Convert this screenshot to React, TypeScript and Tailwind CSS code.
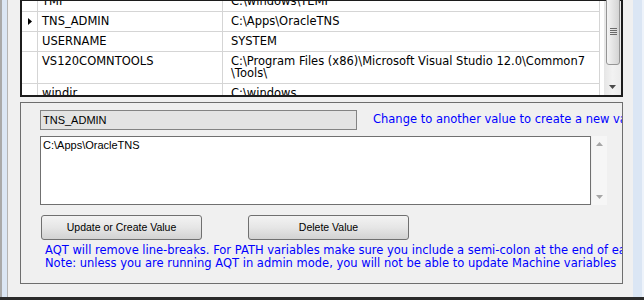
import React from 'react';

const rows = [
    { name: 'TMP', value: ['C:\\windows\\TEMP'], h: 'h-[20px] -mt-[9px]', arrow: false },
    { name: 'TNS_ADMIN', value: ['C:\\Apps\\OracleTNS'], h: 'h-[20px]', arrow: true },
    { name: 'USERNAME', value: ['SYSTEM'], h: 'h-[20px]', arrow: false },
    {
        name: 'VS120COMNTOOLS',
        value: ['C:\\Program Files (x86)\\Microsoft Visual Studio 12.0\\Common7', '\\Tools\\'],
        h: 'h-[32px]',
        arrow: false,
    },
    { name: 'windir', value: ['C:\\windows'], h: 'h-[20px]', arrow: false },
];

function GridScrollBar() {
    return (
        <div className="w-[17px] flex flex-col bg-gradient-to-r from-[#e6e6e6] via-[#f2f2f2] to-[#ebebeb]">
            <div className="-mt-[12px] h-[76px] ml-[2px] mr-[1px] rounded-[3px] border border-[#959595] bg-gradient-to-r from-[#f4f4f4] to-[#d4d4d4] flex items-end justify-center pb-[28px]">
                <svg width="7" height="8" viewBox="0 0 7 8">
                    <line x1="0" y1="0.5" x2="7" y2="0.5" stroke="#6a6a6a" />
                    <line x1="0" y1="2.5" x2="7" y2="2.5" stroke="#6a6a6a" />
                    <line x1="0" y1="4.5" x2="7" y2="4.5" stroke="#6a6a6a" />
                    <line x1="0" y1="6.5" x2="7" y2="6.5" stroke="#6a6a6a" />
                </svg>
            </div>
            <div className="flex-1" />
            <div className="h-[17px] flex items-center justify-center">
                <svg width="7" height="4" viewBox="0 0 7 4">
                    <polygon points="0,0 7,0 3.5,4" fill="#4a4a4a" />
                </svg>
            </div>
        </div>
    );
}

function VariableGrid() {
    return (
        <div className="ml-[12px] w-[603px] h-[97px] border-x-2 border-b-2 border-t border-[#1c1c1c] bg-white flex">
            <div className="flex-1 overflow-hidden flex flex-col font-['DejaVu_Sans',sans-serif] text-[11.5px] text-black leading-[12px]">
                {rows.map((r) => (
                    <div key={r.name} className={`shrink-0 w-[578px] flex border-b border-[#d5d5d5] ${r.h}`}>
                        <div className="w-[16px] border-r border-[#d5d5d5] flex items-center justify-center">
                            {r.arrow && (
                                <svg width="4" height="7" viewBox="0 0 4 7">
                                    <polygon points="0,0 4,3.5 0,7" fill="#000" />
                                </svg>
                            )}
                        </div>
                        <div className="w-[185px] border-r border-[#d5d5d5] pl-[4px] pt-[3px] whitespace-nowrap">
                            {r.name}
                        </div>
                        <div className="w-[377px] border-r border-[#d5d5d5] pl-[8px] pt-[3px] whitespace-nowrap">
                            {r.value.map((v) => (
                                <div key={v}>{v}</div>
                            ))}
                        </div>
                    </div>
                ))}
            </div>
            <GridScrollBar />
        </div>
    );
}

function WinButton({ label }: { label: string }) {
    return (
        <button className="w-[161px] h-[25px] rounded-[3px] border border-[#707070] bg-gradient-to-b from-[#f3f3f3] via-[#e6e6e6] to-[#d2d2d2] font-['Liberation_Sans',sans-serif] text-[10.5px] text-black">
            {label}
        </button>
    );
}

export default function App() {
    return (
        <div className="w-[644px] h-[300px] flex flex-col bg-[#f0f0f0] overflow-hidden">
            <div className="flex flex-1 min-h-0">
                <div className="w-[2px] bg-[#a9a9a9]" />
                <div className="w-[5px] bg-[#dbe6f4]" />
                <div className="w-px bg-[#b4b4b4]" />
                <div className="w-[625px] flex flex-col">
                    <VariableGrid />

                    <div className="ml-[12px] mt-[5px] w-[603px] h-[182px] border border-[#6e6e6e] overflow-hidden pl-[19px] pt-[7px]">
                        <div className="flex items-center">
                            <div className="shrink-0 w-[317px] h-[20px] border border-[#838383] bg-[#e3e3e3] pl-[2px] flex items-center font-['Liberation_Sans',sans-serif] text-[11px] text-black">
                                TNS_ADMIN
                            </div>
                            <div className="shrink-0 ml-[16px] whitespace-nowrap font-['DejaVu_Sans',sans-serif] text-[11.5px] text-[#0000ff]">
                                Change to another value to create a new variable
                            </div>
                        </div>

                        <div className="mt-[6px] flex">
                            <div className="shrink-0 w-[551px] h-[69px] border border-[#707070] bg-white pl-[2px] pt-[2px] font-['Liberation_Sans',sans-serif] text-[11px] leading-[13px] text-black">
                                C:\Apps\OracleTNS
                            </div>
                            <div className="shrink-0 ml-px w-[15px] h-[69px] bg-[#f6f6f6] flex flex-col items-center justify-between py-[6px]">
                                <svg width="7" height="4" viewBox="0 0 7 4">
                                    <polygon points="0,4 7,4 3.5,0" fill="#a6a6a6" />
                                </svg>
                                <svg width="7" height="4" viewBox="0 0 7 4">
                                    <polygon points="0,0 7,0 3.5,4" fill="#a6a6a6" />
                                </svg>
                            </div>
                        </div>

                        <div className="mt-[10px] ml-px flex gap-[46px]">
                            <WinButton label="Update or Create Value" />
                            <WinButton label="Delete Value" />
                        </div>

                        <div className="mt-[4px] ml-[5px] whitespace-nowrap font-['DejaVu_Sans',sans-serif] text-[11.5px] leading-[13px] text-[#0000ff]">
                            <div>AQT will remove line-breaks. For PATH variables make sure you include a semi-colon at the end of each entry</div>
                            <div>Note: unless you are running AQT in admin mode, you will not be able to update Machine variables</div>
                        </div>
                    </div>
                </div>
                <div className="w-[1px] bg-[#f0f0f0]" />
                <div className="w-[9px] bg-[#dbe6f4]" />
                <div className="w-[2px] bg-[#eef3fa]" />
            </div>
            <div className="h-[3px] bg-[#2b2b2b]" />
        </div>
    );
}
